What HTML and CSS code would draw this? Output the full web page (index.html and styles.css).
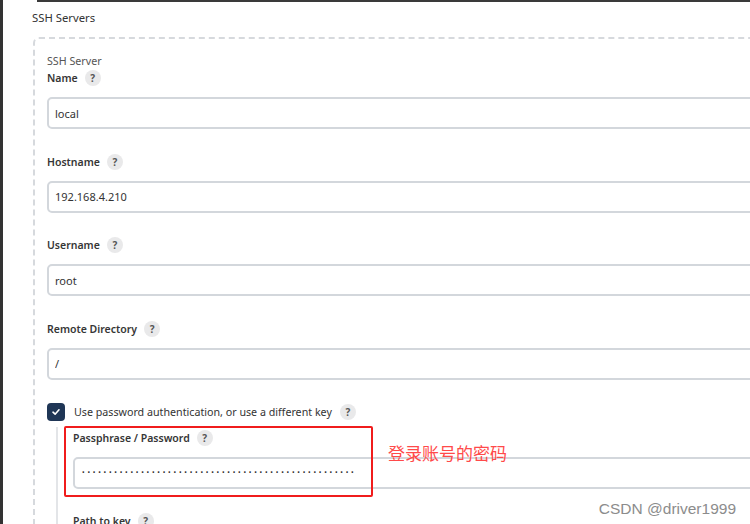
FILE: index.html
```html
<!DOCTYPE html>
<html lang="zh-CN">
<head>
    <meta charset="UTF-8">
    <meta name="viewport" content="width=device-width, initial-scale=1.0">
    <title>SSH Servers</title>
    <link rel="stylesheet" href="styles.css">
</head>
<body>
    <div class="topbar"></div>

    <div class="section-title">SSH Servers</div>

    <div class="repeated">
        <div class="repeated-title">SSH Server</div>

        <div class="field first">
            <div class="label">Name <span class="help">?</span></div>
            <input class="text-input" type="text" value="local" readonly>
        </div>

        <div class="field">
            <div class="label">Hostname <span class="help">?</span></div>
            <input class="text-input" type="text" value="192.168.4.210" readonly>
        </div>

        <div class="field">
            <div class="label">Username <span class="help">?</span></div>
            <input class="text-input" type="text" value="root" readonly>
        </div>

        <div class="field">
            <div class="label">Remote Directory <span class="help">?</span></div>
            <input class="text-input" type="text" value="/" readonly>
        </div>

        <div class="check-row">
            <span class="checkbox">
                <svg width="10" height="10" viewBox="0 0 10 10"><path d="M2 5.2 L4.1 7.2 L8 2.8" fill="none" stroke="#fff" stroke-width="1.6" stroke-linecap="round" stroke-linejoin="round"/></svg>
            </span>
            <span class="check-label">Use password authentication, or use a different key</span>
            <span class="help">?</span>
        </div>

        <div class="nested">
            <div class="field first">
                <div class="label">Passphrase / Password <span class="help">?</span></div>
                <input class="text-input password" type="password" value="xxxxxxxxxxxxxxxxxxxxxxxxxxxxxxxxxxxxxxxxxxxxxxxxxxx" readonly>
            </div>

            <div class="field">
                <div class="label">Path to key <span class="help">?</span></div>
            </div>

            <!-- annotation drawn over the screenshot -->
            <div class="mark-box"></div>
            <div class="mark-text">登录账号的密码</div>
        </div>
    </div>

    <div class="watermark">CSDN @driver1999</div>
</body>
</html>
```

FILE: styles.css
```css
html, body {
    margin: 0;
    padding: 0;
}

body {
    width: 747px;
    height: 524px;
    overflow: hidden;
    position: relative;
    border-left: 3px solid #333;
    background-color: #fff;
    font-family: "Noto Sans", "Open Sans", sans-serif;
    font-size: 10.7px;
    color: #333;
}

.topbar {
    height: 2px;
    margin-left: 34px;
    background-color: #3a3a3a;
}

.section-title {
    margin: 8px 0 0 29px;
    font-size: 11.3px;
    line-height: 16px;
    color: #333;
}

.repeated {
    width: 760px;
    margin: 11px 0 0 30px;
    padding: 14px 0 20px 12px;
    border: 2px dashed #d6d9dd;
    border-right: none;
    border-radius: 6px 0 0 6px;
}

.repeated-title {
    line-height: 16px;
    color: #555;
}

.field {
    margin-top: 23.5px;
}

.field.first {
    margin-top: 0;
}

.label {
    display: flex;
    align-items: center;
    gap: 7px;
    height: 18px;
    margin-bottom: 10px;
    font-size: 10.5px;
    font-weight: 600;
    color: #363636;
}

.help {
    display: inline-flex;
    align-items: center;
    justify-content: center;
    width: 16px;
    height: 16px;
    border-radius: 50%;
    background-color: #e9e9ea;
    color: #555;
    font-size: 10px;
    font-weight: 700;
}

.text-input {
    display: block;
    box-sizing: border-box;
    width: 100%;
    height: 32px;
    padding: 0 6px;
    border: 2px solid #d3d7dc;
    border-radius: 5px;
    background-color: #fff;
    font-family: "Noto Sans", "Open Sans", sans-serif;
    font-size: 11px;
    color: #333;
    outline: none;
}

.text-input.password {
    padding-left: 7px;
    font-size: 7px;
    letter-spacing: 2.75px;
}

.check-row {
    display: flex;
    align-items: center;
    gap: 8px;
    margin-top: 22px;
    height: 20px;
}

.checkbox {
    display: inline-flex;
    align-items: center;
    justify-content: center;
    width: 18px;
    height: 18px;
    border-radius: 4px;
    background-color: #1f3656;
    margin-right: 1px;
}

.check-label {
    font-weight: 400;
    color: #333;
}

.nested {
    position: relative;
    margin: 5px 0 0 9px;
    padding: 2px 0 0 15px;
    border-left: 2px solid #e3e5e8;
}

.nested .field {
    margin-top: 23px;
}

.nested .field.first {
    margin-top: 0;
}

.mark-box {
    position: absolute;
    left: 6px;
    top: -1px;
    width: 305px;
    height: 67px;
    border: 2px solid #f01c1c;
    border-radius: 2px;
}

.mark-text {
    position: absolute;
    left: 330px;
    top: 13px;
    font-family: "Noto Sans CJK SC", sans-serif;
    font-size: 17px;
    color: #ff4a4a;
}

.watermark {
    position: absolute;
    right: 14px;
    bottom: 6px;
    font-family: "Liberation Sans", sans-serif;
    font-size: 15.5px;
    color: #8c8c8c;
}
```
